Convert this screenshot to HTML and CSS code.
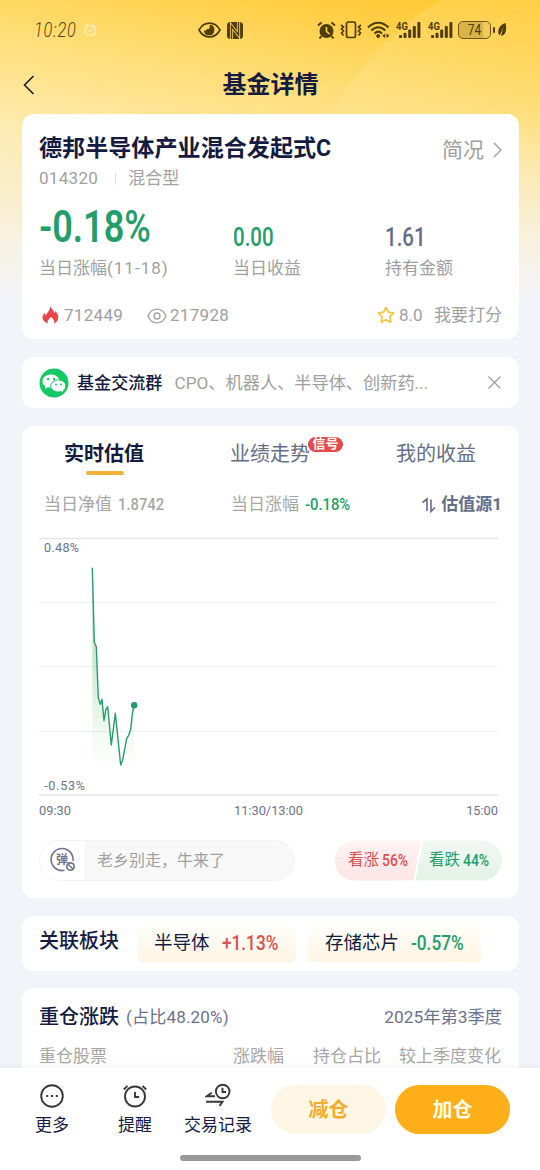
FILE: index.html
```html
<!DOCTYPE html>
<html lang="zh-CN">
<head>
<meta charset="utf-8">
<title>基金详情</title>
<link rel="stylesheet" href="styles.css">
</head>
<body>
<div class="phone">
  <div class="status">
    <div class="clock">10:20</div>
    <svg class="st-app" width="12" height="12" viewBox="0 0 12 12" fill="none" stroke="#fff3c4" stroke-width="1.2"><rect x="1" y="1.5" width="10" height="9.5" rx="2.5"/><path d="M3.5 0v4M8.5 0v4M4 7h4"/></svg>
    <svg class="st-eye" width="23" height="16" viewBox="0 0 23 16"><path d="M1 8C6-1.200 17-1.200 22 8 17 17.200 6 17.200 1 8z" fill="none" stroke="#4e3d0b" stroke-width="1.700"/><path d="M12.500 2.800a5.300 5.300 0 1 1-6.700 5.700c1.700.8 3-.2 3-1.700 1.500.8 3.500 0 2.700-2.800z" fill="#4e3d0b"/></svg>
    <svg class="st-nfc" width="16" height="17" viewBox="0 0 16 17"><rect width="16" height="17" rx="3.500" fill="#4e3d0b"/><path d="M4.500 17V4l7 9V0" fill="none" stroke="#ffd55b" stroke-width="3.200"/><path d="M4.500 17V4l7 9V0" fill="none" stroke="#4e3d0b" stroke-width="1.500"/></svg>
    <svg class="st-alarm" width="19" height="19" viewBox="0 0 19 19"><circle cx="9.500" cy="10" r="7" fill="#4e3d0b"/><path d="M1 4.500 4.500 1.500M18 4.500 14.500 1.500M4.500 15 2.500 17.500M14.500 15l2 2.500" stroke="#4e3d0b" stroke-width="2"/><path d="M9.500 6v4.500l3 2.500" fill="none" stroke="#ffd04a" stroke-width="1.600"/></svg>
    <svg class="st-vib" width="22" height="18" viewBox="0 0 22 18" fill="none" stroke="#4e3d0b"><rect x="6.500" y="1" width="9" height="15.500" rx="2" stroke-width="1.700"/><path d="m1 4 2.500 2L1.500 8l2 2-2 2 2 2.500M21 4l-2.500 2 2 2-2 2 2 2-2 2.500" stroke-width="1.700"/></svg>
    <svg class="st-wifi" width="23" height="18" viewBox="0 0 23 18" fill="none" stroke="#4e3d0b" stroke-width="2"><path d="M1 6.500c6-6.500 14.500-6.500 20.500 0M4.300 9.500c4.500-4.500 9.500-4.500 14 0M7.500 12.500c2.500-2.500 5-2.500 7.500 0"/><circle cx="11.200" cy="15" r="1.500" fill="#4e3d0b" stroke-width="1"/><path d="M18.200 12.500v4.500l-3-2.200zM19.500 12.500v4.500l3-2.200z" fill="#4e3d0b" stroke="none"/></svg>
    <div class="sig sig-a"><span>4G</span><svg width="26" height="18" viewBox="0 0 26 18" fill="#4e3d0b"><rect x="4" y="14" width="3" height="3" rx="1"/><rect x="8.500" y="11.800" width="3" height="5.200" rx="1"/><rect x="13.200" y="8.500" width="3" height="8.500" rx="1"/><rect x="17.800" y="5" width="3" height="12" rx="1"/><rect x="22.400" y="1" width="3" height="16" rx="1"/></svg></div>
    <div class="sig sig-b"><span>4G</span><svg width="26" height="18" viewBox="0 0 26 18" fill="#4e3d0b"><rect x="4" y="14" width="3" height="3" rx="1"/><rect x="8.500" y="11.800" width="3" height="5.200" rx="1"/><rect x="13.200" y="8.500" width="3" height="8.500" rx="1"/><rect x="17.800" y="5" width="3" height="12" rx="1"/><rect x="22.400" y="1" width="3" height="16" rx="1"/></svg></div>
    <div class="battery"><span>74</span></div>
    <svg class="st-leaf" width="14" height="16" viewBox="0 0 14 16" fill="#4e3d0b"><rect x="0" y="5" width="2" height="6" rx="1"/><path d="M12.500 1C7 3 4.500 7 5.500 12l1.500 1 3.500-8L8 14c5-1 6-6 4.500-13z"/></svg>
  </div>

  <div class="titlebar">
    <svg class="back" width="12" height="20" viewBox="0 0 12 20" fill="none" stroke="#1d1d2b" stroke-width="1.600"><path d="M10.500 1 1.500 10l9 9"/></svg>
    <h1>基金详情</h1>
  </div>

  <main class="content">
    <section class="card fund">
      <div class="fund-head">
        <div>
          <h2>德邦半导体产业混合发起式C</h2>
          <div class="fund-sub"><span class="num">014320</span><i></i><span>混合型</span></div>
        </div>
        <div class="brief">简况<svg width="9" height="16" viewBox="0 0 9 16" fill="none" stroke="#a4a4a4" stroke-width="1.500"><path d="m1 1 7 7-7 7"/></svg></div>
      </div>
      <div class="metrics">
        <div><b class="big green"><span class="din">-0.18<i>%</i></span></b><p>当日涨幅<span class="date">(11-18)</span></p></div>
        <div><b class="mid green"><span class="din">0.00</span></b><p>当日收益</p></div>
        <div><b class="mid slate"><span class="din">1.61</span></b><p>持有金额</p></div>
      </div>
      <div class="stats">
        <svg class="flame" width="17" height="18" viewBox="0 0 17 18"><path d="M8 0c1 2.500 4 4 4.300 7 .8-.4 1-1.200 1.200-2 3.500 4 4.500 9.500-1.300 12.700.5-3-.7-4.700-3.200-6.700-2 2-4.200 3.500-3.200 6.700C-1 14.500-.5 9.500 3 7c-.1 1.200.2 2 .9 2.500C5 6.500 8.500 4.500 8 0z" fill="#e8484b"/></svg>
        <span class="num fire-n">712449</span>
        <svg class="view" width="20" height="16" viewBox="0 0 20 16" fill="none" stroke="#a5a5a5" stroke-width="1.400"><path d="M1 8C5-1.200 15-1.200 19 8 15 17.200 5 17.200 1 8z"/><circle cx="10" cy="8" r="3"/></svg>
        <span class="num">217928</span>
        <svg class="star" width="18" height="18" viewBox="0 0 18 18" fill="none" stroke="#f4c23c" stroke-width="1.700" stroke-linejoin="round"><path d="m9 1.300 2.400 4.900 5.400.8-3.900 3.800.9 5.400L9 13.700l-4.800 2.500.9-5.400L1.200 7l5.400-.8z"/></svg>
        <span class="score">8.0</span><span>我要打分</span>
      </div>
    </section>

    <section class="card group">
      <svg width="30" height="30" viewBox="0 0 30 30"><circle cx="15" cy="15" r="14.500" fill="#16c864"/><path d="M12 6.500c-5 0-8.500 3-8.500 6.700 0 2.200 1 3.800 2.800 5L6 21l3-1.800c1 .3 2 .4 3 .4 5 0 8.500-2.900 8.500-6.400S17 6.500 12 6.500z" fill="#fff"/><path d="M19.300 12c-4.300 0-7.500 2.700-7.500 6s3.200 6 7.500 6c1 0 2-.2 2.800-.4l2.500 1.400-.5-2.300c1.700-1.100 2.700-2.700 2.700-4.700 0-3.300-3.200-6-7.500-6z" fill="#fff" stroke="#16c864"/><g fill="#16c864"><circle cx="9" cy="11" r="1.200"/><circle cx="15" cy="11" r="1.200"/><circle cx="17" cy="16.500" r="1"/><circle cx="22" cy="16.500" r="1"/></g></svg>
      <strong>基金交流群</strong>
      <span class="topic"><span class="cpo">CPO</span>、机器人、半导体、创新药...</span>
      <svg class="close" width="13" height="13" viewBox="0 0 13 13" stroke="#a0a0a0" stroke-width="1.300"><path d="m.5.5 12 12M12.500.5l-12 12"/></svg>
    </section>

    <section class="card chart-card">
      <div class="tabs">
        <span class="tab active">实时估值</span>
        <span class="tab">业绩走势<em>信号</em></span>
        <span class="tab">我的收益</span>
      </div>
      <div class="quote">
        <span>当日净值</span><span class="qv"><span class="din">1.8742</span></span>
        <span class="q2">当日涨幅</span><span class="qv green"><span class="din">-0.18%</span></span>
        <span class="source"><svg width="14" height="16" viewBox="0 0 14 16" fill="none" stroke="#666d87" stroke-width="1.600"><path d="M.5 5.500 5 2v12M9 2.500v12l4-4"/></svg>估值源1</span>
      </div>
      <svg class="chart" width="460" height="266" viewBox="39 534 460 266">
        <defs><linearGradient id="area" x1="0" y1="567" x2="0" y2="762" gradientUnits="userSpaceOnUse"><stop offset="0" stop-color="#6dbf84" stop-opacity=".6"/><stop offset=".6" stop-color="#8fce96" stop-opacity=".36"/><stop offset="1" stop-color="#b5dfb5" stop-opacity=".03"/></linearGradient></defs>
        <path d="M39 538.500H498M39 795H498" stroke="#e5e6e9" stroke-width="1.300"/>
        <path d="M39 602.500H498M39 666.500H498M39 731.500H498" stroke="#f0f1f2"/>
        <path d="M92.300 567.700l2 74.600 2 4.400 2 51 2 6.600 1.700-5 2 21.400 1.700-10.700 2-3.300 3.600 38.300 4-31.700 5.400 51.700 2-5 4-21.700 2-3 2-6 1.600-15.300 1.700-8.700V762H92.300z" fill="url(#area)"/>
        <path d="M92.300 567.700l2 74.600 2 4.400 2 51 2 6.600 1.700-5 2 21.400 1.700-10.700 2-3.300 3.600 38.300 4-31.700 5.400 51.700 2-5 4-21.700 2-3 2-6 1.600-15.300 1.700-8.700" fill="none" stroke="#2a9c6b" stroke-width="1.400" stroke-linejoin="round"/>
        <circle cx="134.200" cy="705.300" r="3.200" fill="#219b68"/>
        <text x="44" y="551.500" textLength="35">0.48%</text><text x="44" y="790" textLength="41">-0.53%</text>
      </svg>
      <div class="axis"><span>09:30</span><span>11:30/13:00</span><span>15:00</span></div>
      <div class="social">
        <div class="barrage">
          <div class="bicon"><svg width="28" height="26" viewBox="0 0 28 26" fill="none" stroke="#6e7590"><path d="M15.500 23.300A11 11 0 1 1 24 14" stroke-width="1.600"/><circle cx="21.500" cy="19.500" r="3.700" stroke-width="1.700"/><path d="m19 17 5 5" stroke-width="1.500"/><text x="7" y="17">弹</text></svg></div>
          <span>老乡别走，牛来了</span>
        </div>
        <div class="vote">
          <svg width="168" height="41" viewBox="0 0 168 41"><defs><linearGradient id="up" x2="0" y2="1"><stop stop-color="#fff3f3"/><stop offset="1" stop-color="#fde5e6"/></linearGradient><linearGradient id="down" x2="0" y2="1"><stop stop-color="#f1f8f2"/><stop offset="1" stop-color="#e3f2e7"/></linearGradient></defs><path d="M20.500.5H84q3 0 2.500 3L80 38q-.5 2.500-3 2.500H20.500a20 20 0 0 1 0-40z" fill="url(#up)"/><path d="M92 .5h56a20 20 0 0 1 0 40H84q-2.500 0-2-3L89 3q.5-2.500 3-2.500z" fill="url(#down)"/></svg>
          <div class="vote-text"><span class="red">看涨</span><b class="red"><span class="din">56%</span></b><span class="green v2">看跌</span><b class="green"><span class="din">44%</span></b></div>
        </div>
      </div>
    </section>

    <section class="card sector">
      <strong>关联板块</strong>
      <div class="chip c1"><span>半导体</span><b class="red"><span class="din">+1.13%</span></b></div>
      <div class="chip c2"><span>存储芯片</span><b class="green"><span class="din">-0.57%</span></b></div>
    </section>

    <section class="card holdings">
      <div class="hold-head"><strong>重仓涨跌</strong><span class="ratio">(占比48.20%)</span><span class="season">2025年第3季度</span></div>
      <div class="cols"><span>重仓股票</span><span>涨跌幅</span><span>持仓占比</span><span>较上季度变化</span></div>
    </section>
  </main>

  <nav class="bottom">
    <div class="actions">
      <div class="act"><svg width="26" height="26" viewBox="0 0 26 26" fill="none" stroke="#383838" stroke-width="1.900"><circle cx="13" cy="13" r="10.800"/><path d="M7.200 13h2M12 13h2M16.800 13h2" stroke-width="2"/></svg><span>更多</span></div>
      <div class="act"><svg width="26" height="26" viewBox="0 0 26 26" fill="none" stroke="#383838" stroke-width="1.900"><circle cx="13" cy="13.500" r="10"/><path d="M13 9v5h4.200M1.800 6.500l3.700-3.700M24.200 6.500l-3.700-3.700"/></svg><span>提醒</span></div>
      <div class="act wide"><svg width="26" height="26" viewBox="0 0 26 26" fill="none" stroke="#383838" stroke-width="1.900"><circle cx="17.700" cy="8.500" r="6.800"/><path d="M17.500 4.800v4.200h3.500M10 13.300H1.500l5.300-3.600M1 18.700h16.500l-3 4.300"/></svg><span>交易记录</span></div>
      <button class="btn reduce">减仓</button>
      <button class="btn add">加仓</button>
    </div>
    <div class="home"></div>
  </nav>
</div>
</body>
</html>
```
FILE: styles.css
```css
* { box-sizing: border-box; margin: 0; padding: 0; }
body {
  width: 540px; height: 1170px; overflow: hidden;
  font-family: Roboto, "Noto Sans CJK SC", sans-serif;
  font-size: 17px; color: #151b40;
}
svg { display: block; flex: none; }
span, strong, b { white-space: nowrap; }
.phone {
  width: 540px; height: 1170px; display: flex; flex-direction: column; overflow: hidden;
  background:
    linear-gradient(180deg, rgba(243,244,250,0) 0, rgba(243,244,250,.08) 110px, rgba(243,244,250,.5) 210px, #f3f4fa 300px),
    radial-gradient(circle 310px at 600px 265px, rgba(255,238,165,.2) 0 308px, rgba(255,238,165,0) 310px),
    linear-gradient(192deg, #ffc62b 0, #ffd04a 70px, #ffdf78 150px, #ffe9a4 230px, #ffecb0 400px);
}

/* status bar */
.status { height: 60px; padding-left: 34px; display: flex; align-items: center; flex: none; }
.clock { width: 44px; font: italic 300 21px/60px Roboto, sans-serif; color: #55430f; transform: scaleX(.78); transform-origin: 0 50%; letter-spacing: 1px; }
.st-app { margin-left: 6px; }
.st-eye { margin-left: 102px; }
.st-nfc { margin-left: 6px; }
.st-alarm { margin-left: 74px; }
.st-vib { margin-left: 4px; }
.st-wifi { margin-left: 5px; }
.sig { position: relative; width: 26px; margin-left: 6px; }
.sig-a { margin-left: 5px; }
.sig span { position: absolute; left: 1px; top: -1px; font: 700 11.5px/12px Roboto, sans-serif; color: #4e3d0b; transform: scaleX(.82); transform-origin: 0 0; }
.battery { margin-left: 5px; width: 33px; height: 18px; border: 1.5px solid #6b551a; border-radius: 5px; background: linear-gradient(90deg, #d9b345 77%, #efca5b 77%); text-align: center; font: 14px/16px Roboto, sans-serif; color: #4e3d0b; }
.battery span { display: block; transform: scaleX(.85); }
.st-leaf { margin-left: 2px; }

.titlebar { height: 54px; flex: none; display: grid; grid-template-columns: 23px 12px 1fr 34px; }
.back { grid-column: 2; margin-top: 15px; }
h1 { text-align: center; font-size: 24px; line-height: 51px; font-weight: 700; }

.content { flex: 1; min-height: 0; overflow: hidden; padding: 0 21px 0 22px; display: flex; flex-direction: column; gap: 18px; }
.card { background: #fff; border-radius: 12px; flex: none; padding: 0 17px; }
.green { color: #239d69; }
.red { color: #d94f50; }
.slate { color: #666d87; }
.din { display: inline-block; transform: scaleX(.82); transform-origin: 0 50%; }
.num { letter-spacing: .3px; }
.date { letter-spacing: 1px; }

/* fund summary */
.fund { height: 225px; color: #a0a0a0; }
.fund-head { display: flex; justify-content: space-between; height: 90px; }
h2 { font-size: 23.1px; line-height: 34px; margin-top: 18px; color: #151b40; white-space: nowrap; }
.fund-sub { display: flex; align-items: center; line-height: 25px; }
.fund-sub i { width: 1px; height: 12px; background: #dedede; margin: 0 12px 0 17px; }
.brief { font-size: 21px; line-height: 30px; margin-top: 21px; height: 30px; display: flex; align-items: center; gap: 9px; }
.metrics { display: grid; grid-template-columns: 194px 152px 1fr; height: 76px; }
.metrics b { display: block; height: 52px; overflow: visible; }
.metrics p { line-height: 26px; height: 26px; margin-top: -1px; white-space: nowrap; }
.big { font-size: 44px; line-height: 46px; font-weight: 600; }
.big i { font-style: normal; font-weight: 500; }
.mid { font-size: 25px; font-weight: 500; line-height: 68px; }
.stats { height: 30px; margin-top: 20px; display: flex; align-items: center; line-height: 30px; }
.flame { margin: 0 5px 0 3px; }
.fire-n { width: 58px; }
.view { margin: 2px 3px 0 25px; }
.star { margin-left: auto; margin-right: 4px; }
.score { width: 35px; }

/* chat group */
.group { height: 51px; display: flex; align-items: center; line-height: 48px; }
.group strong { font-weight: 500; margin: 0 12px 0 8px; font-size: 17.1px; }
.topic { color: #a0a0a0; font-size: 17.2px; }
.close { margin-left: auto; margin-right: 1px; }

/* valuation */
.chart-card { height: 472px; }
.tabs { display: grid; grid-template-columns: 26px 166px 166px 1fr; height: 63px; }
.tab { font-size: 20px; line-height: 57px; left: -1px; color: #666d87; position: relative; }
.tab.active { grid-column: 2; color: #151b40; font-weight: 700; }
.tab.active::after { content: ""; position: absolute; left: 22px; top: 45px; width: 38px; height: 4px; border-radius: 2px; background: #f0b139; }
.tab em { position: absolute; left: 78px; top: 11px; width: 35px; height: 15px; border-radius: 8px; background: #e34b4c; color: #fff; font: 700 13px/14px Roboto, "Noto Sans CJK SC", sans-serif; text-align: center; }
.quote { height: 31px; line-height: 31px; display: flex; color: #a6a6a6; padding-left: 5px; }
.qv { margin-left: 6px; width: 46px; font-weight: 500; }
.quote .din { transform: scaleX(.87); }
.q2 { margin-left: 67px; }
.source { margin-left: auto; color: #666d87; font-weight: 700; display: flex; align-items: center; gap: 5px; }
.chart { margin-top: 14px; }
.chart text { font: 12.500px Roboto, sans-serif; fill: #6b728c; }
.axis { height: 20px; line-height: 22px; display: grid; grid-template-columns: 1fr 1fr 1fr; font-size: 12.800px; color: #6b728c; width: 459px; }
.axis span:nth-child(2) { text-align: center; }
.axis span:nth-child(3) { text-align: right; }
.social { display: flex; justify-content: space-between; margin-top: 20px; height: 41px; }
.barrage { width: 256px; height: 41px; border: 1px solid #f4f4f5; border-radius: 21px; background: #f8f8f8; overflow: hidden; display: flex; font-size: 16px; line-height: 39px; color: #a0a0a0; }
.bicon { width: 46px; background: #fff; border-right: 1px solid #f4f4f5; margin-right: 11px; padding: 6px 0 0 9px; }
.bicon text { font: 700 12px "Noto Sans CJK SC", sans-serif; fill: #6e7590; stroke: none; }
.vote { position: relative; width: 168px; height: 41px; }
.vote-text { position: absolute; inset: 0; padding-left: 14px; display: flex; font-size: 15.500px; line-height: 41px; }
.vote b { width: 31px; margin-left: 3px; font-size: 17px; font-weight: 500; }
.v2 { margin-left: 16px; }

/* related sectors */
.sector { height: 55px; display: flex; }
.sector strong { font-size: 20px; font-weight: 500; line-height: 50px; width: 98px; }
.chip { height: 36px; margin-top: 10px; border-radius: 5px; background: linear-gradient(#fffefa, #fff4e3); padding-left: 17px; display: flex; font-size: 18.500px; line-height: 35px; }
.chip b { font-size: 20px; font-weight: 500; margin-left: 12px; line-height: 35px; }
.chip .din { transform: scaleX(.86); }
.c1 { width: 159px; margin-right: 12px; }
.c2 { width: 173px; }

.holdings { height: 120px; margin-top: -1px; }
.hold-head { display: flex; line-height: 30px; padding-top: 14px; color: #6b728c; }
.hold-head strong { font-size: 20px; line-height: 31px; font-weight: 500; color: #151b40; margin-right: 7px; }
.ratio { letter-spacing: .2px; }
.season { margin-left: auto; font-size: 17.300px; }
.cols { color: #a6a6a6; line-height: 31px; margin-top: 8px; display: grid; grid-template-columns: 194px 80px 86px 1fr; }

/* bottom bar */
.bottom { flex: none; height: 102px; background: #fff; box-shadow: 0 -2px 5px rgba(50,55,90,.05); position: relative; }
.actions { display: flex; padding: 15px 0 0 18px; height: 87px; }
.act { width: 68px; margin-right: 15px; display: flex; flex-direction: column; align-items: center; line-height: 32px; }
.act.wide { width: 70px; margin: 0 18px 0 -1px; }
.btn { margin-top: 2px; width: 115px; height: 49px; border: 0; border-radius: 25px; font: 700 20px/48px Roboto, "Noto Sans CJK SC", sans-serif; }
.reduce { background: #fff6e6; color: #f3ad2e; margin-right: 9px; }
.add { background: #fdae19; color: #fffbe8; }
.home { width: 181px; height: 6px; border-radius: 3px; background: #999; margin: 0 auto; }
```
